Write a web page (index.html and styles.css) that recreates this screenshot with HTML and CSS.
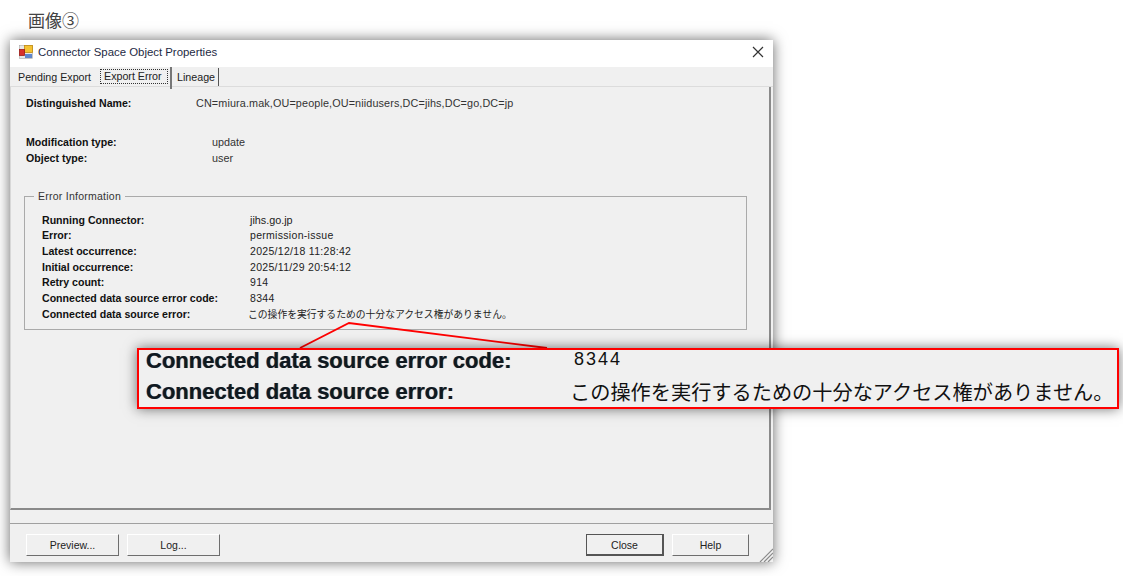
FILE: index.html
```html
<!doctype html>
<html>
<head>
<meta charset="utf-8">
<title>Connector Space Object Properties</title>
<link rel="stylesheet" href="styles.css">
</head>
<body>
<p class="caption">画像③</p>

<div class="win">
	<div class="titlebar">
		<svg class="app-icon" width="14" height="14" viewBox="0 0 14 14">
			<rect x="0.5" y="0.5" width="13" height="13" fill="#e8e8e8" stroke="#a8a8a8" stroke-width=".6"/>
			<rect x="5.5" y="0.5" width="8" height="7" fill="#f4c232" stroke="#c08a10" stroke-width=".8"/>
			<rect x="0.5" y="4.5" width="5" height="6" fill="#d8302a" stroke="#9c1c18" stroke-width=".8"/>
			<rect x="6" y="9" width="7" height="4" fill="#5f86cc"/>
		</svg>
		<span class="title">Connector Space Object Properties</span>
		<svg class="close-x" width="12" height="12" viewBox="0 0 12 12">
			<path d="M1 1L11 11M11 1L1 11" stroke="#333" stroke-width="1.2" fill="none"/>
		</svg>
	</div>

	<div class="tabs">
		<span class="tab tab-first">Pending Export</span>
		<span class="tab tab-on"><span class="focus">Export Error</span></span>
		<span class="tab tab-last">Lineage</span>
	</div>

	<div class="panel">
		<div class="row row-dn">
			<b>Distinguished Name:</b>
			<span>CN=miura.mak,OU=people,OU=niidusers,DC=jihs,DC=go,DC=jp</span>
		</div>
		<div class="types">
			<div class="row"><b>Modification type:</b><span>update</span></div>
			<div class="row"><b>Object type:</b><span>user</span></div>
		</div>
		<div class="group">
			<span class="legend">Error Information</span>
			<div class="row"><b>Running Connector:</b><span>jihs.go.jp</span></div>
			<div class="row"><b>Error:</b><span class="wide">permission-issue</span></div>
			<div class="row"><b>Latest occurrence:</b><span class="wide">2025/12/18 11:28:42</span></div>
			<div class="row"><b>Initial occurrence:</b><span class="wide">2025/11/29 20:54:12</span></div>
			<div class="row"><b>Retry count:</b><span class="wide">914</span></div>
			<div class="row"><b>Connected data source error code:</b><span class="wide">8344</span></div>
			<div class="row"><b>Connected data source error:</b><span class="ja">この操作を実行するための十分なアクセス権がありません。</span></div>
		</div>
	</div>

	<div class="footer">
		<div class="btns">
			<a class="btn btn-preview">Preview...</a>
			<a class="btn btn-log">Log...</a>
		</div>
		<div class="btns">
			<a class="btn btn-close">Close</a>
			<a class="btn btn-help">Help</a>
		</div>
		<svg class="grip" width="14" height="14" viewBox="0 0 14 14">
			<path d="M14 1L1 14M14 5L5 14M14 9L9 14" stroke="#8a8a8a" stroke-width="1.2" fill="none"/>
		</svg>
	</div>
</div>

<svg class="leader" width="300" height="30" viewBox="0 0 300 30">
	<path d="M1 27L50 2L248 27" stroke="#f00" stroke-width="1.8" fill="none"/>
</svg>

<div class="callout">
	<div class="big-row"><b>Connected data source error code:</b><span class="big-num">8344</span></div>
	<div class="big-row"><b>Connected data source error:</b><span class="big-ja">この操作を実行するための十分なアクセス権がありません。</span></div>
</div>
</body>
</html>
```

FILE: styles.css
```css
*{padding:0;margin:0;box-sizing:border-box;}
html,body{width:1123px;height:576px;overflow:hidden;background:#fff;}
body{font-family:"Liberation Sans","Noto Sans CJK JP",sans-serif;font-size:10.8px;color:#111;}

.caption{height:40px;padding:10px 0 0 28px;font-size:17px;line-height:20px;color:#444;font-family:"Noto Sans CJK JP",sans-serif;}

.win{position:relative;width:763px;height:522px;margin-left:10px;background:#f0f0f0;box-shadow:0 0 13px rgba(0,0,0,.6);display:flex;flex-direction:column;}

.titlebar{height:27px;background:#fff;display:flex;align-items:center;padding:0 9px 3px;flex:none;}
.app-icon{margin-right:5px;}
.title{font-size:11.4px;color:#1d2a44;flex:1;}

.tabs{height:20px;flex:none;display:flex;align-items:flex-end;padding-left:4px;border-bottom:1px solid #dcdcdc;position:relative;font-size:10.7px;color:#222;white-space:nowrap;}
.tab{height:18px;line-height:19px;padding:0 4px;}
.tab-first{width:84px;}
.tab-on{width:74px;height:22px;margin-bottom:-3px;padding:2px 2px;border-right:2px solid #777;position:relative;z-index:1;line-height:14px;}
.focus{display:block;height:15px;border:1px dotted #333;padding-left:3px;line-height:13px;}
.tab-last{width:47px;border-right:1px solid #555;padding-left:5px;}

.panel{height:423px;flex:none;margin-right:2px;border-left:1px solid #d8d8d8;border-right:2px solid #8a8a8a;border-bottom:2px solid #8a8a8a;padding:9px 0 0 15px;}
.row{display:flex;height:15.7px;line-height:15.7px;}
.row b{width:170px;flex:none;font-size:10.6px;color:#111;}
.row-dn span{color:#333;letter-spacing:.13px;}
.types{margin-top:23px;}
.types .row{height:16px;}
.types span{padding-left:16px;color:#333;}

.group{position:relative;width:723px;height:134px;margin:29px 0 0 -2px;border:1px solid #aaa;padding:16px 0 0 17px;}
.legend{position:absolute;left:9px;top:-7px;padding:0 4px;background:#f0f0f0;line-height:13px;font-size:10.5px;letter-spacing:.25px;color:#333;}
.group .row b{width:208px;}
.group .row span{color:#222;}
.group .row .wide{letter-spacing:.3px;font-size:10.5px;}
.ja{font-size:9.8px;margin-left:-2px;font-family:"Noto Sans CJK JP",sans-serif;}

.footer{flex:1;position:relative;margin-top:13px;border-top:1px solid #a0a0a0;display:flex;justify-content:space-between;padding:10px 24px 0 16px;}
.btns{display:flex;gap:8px;}
.btn{display:block;height:22px;line-height:20px;text-align:center;background:#f0f0f0;border:1px solid;border-color:#fff #6e6e6e #6e6e6e #fff;font-size:10.5px;color:#222;}
.btn-preview,.btn-log{width:93px;}
.btn-close{width:78px;border:1px solid #555;border-right-width:2px;border-bottom-width:2px;}
.btn-help{width:77px;}
.grip{position:absolute;right:0;bottom:0;}

.leader{position:absolute;left:299px;top:321px;}
.callout{position:absolute;left:137px;top:348px;width:982px;height:61px;background:#f0f0f0;border:2px solid #f00;box-shadow:0 0 12px rgba(0,0,0,.55);padding:0 0 0 7px;}
.big-row{display:flex;height:31px;line-height:21px;}
.big-row b{width:425px;flex:none;font-size:22px;color:#101820;text-shadow:-.6px 0 rgba(0,90,200,.6),.6px 0 rgba(220,130,0,.6);}
.big-num{font-size:18px;letter-spacing:2px;padding-left:3px;line-height:18px;}
.big-ja{font-size:20.2px;font-family:"Noto Sans CJK JP",sans-serif;color:#111;margin-left:-1px;white-space:nowrap;}
```
